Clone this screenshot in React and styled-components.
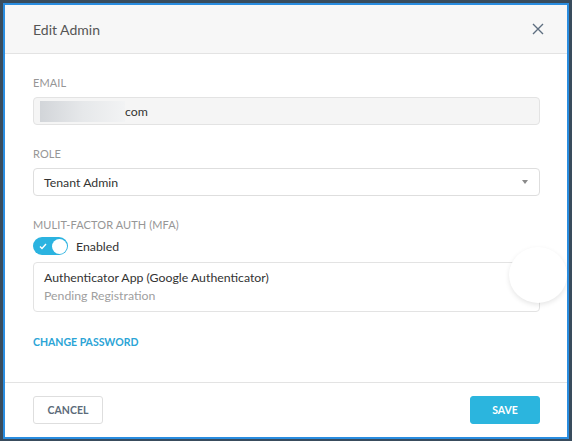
import React from 'react';
import styled, { createGlobalStyle } from 'styled-components';

const GlobalStyle = createGlobalStyle`
  html, body {
    margin: 0;
    padding: 0;
    background: #394c5d;
    font-family: Lato, 'Liberation Sans', sans-serif;
  }
  * { box-sizing: border-box; }
`;

const Page = styled.div`
  width: 572px;
  height: 441px;
  padding: 3px;
  position: relative;
  overflow: hidden;
`;

const Modal = styled.div`
  height: 436px;
  border: 2px solid #2a8de0;
  background: #fff;
  display: flex;
  flex-direction: column;
  position: relative;
  overflow: hidden;
`;

const Header = styled.div`
  height: 49px;
  background: #f7f7f7;
  border-bottom: 1px solid #e3e3e3;
  display: flex;
  align-items: center;
  justify-content: space-between;
  padding: 0 21px 0 28px;
`;

const Title = styled.div`
  font-size: 14px;
  color: #555;
`;

const CloseButton = styled.button`
  border: none;
  background: none;
  padding: 0;
  width: 16px;
  height: 16px;
  display: flex;
  align-items: center;
  justify-content: center;
  cursor: pointer;
`;

const Body = styled.div`
  flex: 1;
  padding: 22px 27px 0 28px;
  display: flex;
  flex-direction: column;
`;

const Label = styled.div`
  font-size: 11px;
  font-weight: 400;
  letter-spacing: 0.1px;
  color: #969696;
  line-height: 14px;
  margin-bottom: ${(p) => p.$gap || 7}px;
`;

const Field = styled.div`
  height: 28px;
  border: 1px solid ${(p) => (p.$readOnly ? '#e3e3e3' : '#dedede')};
  background: ${(p) => (p.$readOnly ? '#f5f5f5' : '#fff')};
  border-radius: 4px;
  display: flex;
  align-items: center;
  padding: 0 10px 0 6px;
  font-size: 12.3px;
  color: #333;
  margin-bottom: 22px;
`;

const Blurred = styled.div`
  width: 85px;
  height: 21px;
  background: linear-gradient(90deg, #d2d5d9 0%, #e6e8ea 50%, #f2f3f4 100%);
  margin-right: 0;
`;

const SelectText = styled.span`
  padding-left: 4px;
  flex: 1;
`;

const Caret = styled.span`
  width: 0;
  height: 0;
  border-left: 3.5px solid transparent;
  border-right: 3.5px solid transparent;
  border-top: 4px solid #8a8a8a;
  margin-right: 1px;
`;

const ToggleRow = styled.div`
  display: flex;
  align-items: center;
  gap: 8px;
  margin-bottom: 7px;
  font-size: 12.3px;
  color: #333;
`;

const Toggle = styled.div`
  width: 35px;
  height: 18px;
  border-radius: 9px;
  background: #2bb3e0;
  position: relative;
  display: flex;
  align-items: center;
  padding-left: 6px;
`;

const Knob = styled.div`
  position: absolute;
  right: 1.5px;
  top: 1.5px;
  width: 15px;
  height: 15px;
  border-radius: 50%;
  background: #fff;
`;

const MethodBox = styled.div`
  height: 50px;
  border: 1px solid #e3e3e3;
  border-radius: 4px;
  padding: 7px 10px;
  display: flex;
  flex-direction: column;
  justify-content: center;
  gap: 2px;
  margin-bottom: 18px;
`;

const MethodName = styled.div`
  font-size: 12.3px;
  color: #333;
  line-height: 16px;
`;

const MethodStatus = styled.div`
  font-size: 12.3px;
  color: #a0a0a0;
  line-height: 16px;
`;

const LinkButton = styled.a`
  font-size: 10.5px;
  font-weight: 700;
  color: #2ba4d6;
  text-decoration: none;
  cursor: pointer;
`;

const Footer = styled.div`
  height: 55px;
  border-top: 1px solid #e3e3e3;
  display: flex;
  align-items: center;
  justify-content: space-between;
  padding: 0 27px 0 28px;
`;

const Button = styled.button`
  height: 28px;
  padding: 0;
  width: 70px;
  border-radius: 3px;
  border: 1px solid ${(p) => (p.$primary ? '#2bb5de' : '#dedede')};
  background: ${(p) => (p.$primary ? '#2bb5de' : '#fff')};
  color: ${(p) => (p.$primary ? '#fff' : '#5c6b7a')};
  font-family: Lato, 'Liberation Sans', sans-serif;
  font-size: 10.5px;
  font-weight: 700;
  cursor: pointer;
`;

const FloatingBubble = styled.div`
  position: absolute;
  left: 504px;
  top: 242px;
  width: 58px;
  height: 56px;
  border-radius: 50%;
  background: #fff;
  box-shadow: 0 2px 5px rgba(0, 0, 0, 0.1);
`;

const EditAdmin = () => {
  return (
    <Page>
      <Modal>
        <Header>
          <Title>Edit Admin</Title>
          <CloseButton>
            <svg width="12" height="12" viewBox="0 0 12 12">
              <path d="M1 1 L11 11 M11 1 L1 11" stroke="#5e6e80" strokeWidth="1.4" />
            </svg>
          </CloseButton>
        </Header>
        <Body>
          <Label>EMAIL</Label>
          <Field $readOnly>
            <Blurred />
            com
          </Field>
          <Label>ROLE</Label>
          <Field>
            <SelectText>Tenant Admin</SelectText>
            <Caret />
          </Field>
          <Label $gap={5}>MULIT-FACTOR AUTH (MFA)</Label>
          <ToggleRow>
            <Toggle>
              <svg width="8" height="7" viewBox="0 0 8 7">
                <path d="M1 3.5 L3 5.5 L7 1" stroke="#fff" strokeWidth="1.4" fill="none" />
              </svg>
              <Knob />
            </Toggle>
            Enabled
          </ToggleRow>
          <MethodBox>
            <MethodName>Authenticator App (Google Authenticator)</MethodName>
            <MethodStatus>Pending Registration</MethodStatus>
          </MethodBox>
          <div>
            <LinkButton>CHANGE PASSWORD</LinkButton>
          </div>
        </Body>
        <Footer>
          <Button>CANCEL</Button>
          <Button $primary>SAVE</Button>
        </Footer>
        <FloatingBubble />
      </Modal>
    </Page>
  );
};

export default function App() {
  return (
    <>
      <GlobalStyle />
      <EditAdmin />
    </>
  );
}
